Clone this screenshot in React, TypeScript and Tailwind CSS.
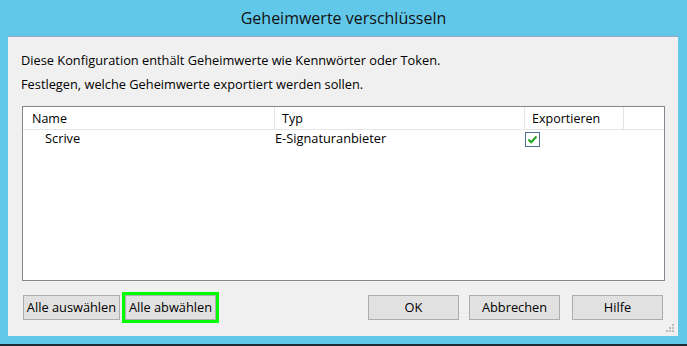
import React from "react";

const font = { fontFamily: '"Segoe UI", "Open Sans", "Liberation Sans", sans-serif' };

function Btn({ children, className = "" }: { children: React.ReactNode; className?: string }) {
  return (
    <div
      className={
        "h-[25px] w-[91px] flex items-center justify-center bg-[#e1e1e1] border border-[#adadad] text-[12.8px] text-[#000] " +
        className
      }
    >
      {children}
    </div>
  );
}

export default function App() {
  return (
    <div className="w-[687px] h-[346px] bg-[#62c8ea] flex flex-col overflow-hidden" style={font}>
      <div className="h-[36px] flex items-center justify-center text-[16px] text-[#111] pb-[1px]">
        Geheimwerte verschlüsseln
      </div>
      <div className="ml-[8px] mr-[9px] h-[300px] bg-[#f0f0f0] border-t border-[#9aa7c9] flex flex-col relative">
        <div className="pl-[13px] pt-[15px] text-[12.8px] text-[#000] leading-[16px]">
          Diese Konfiguration enthält Geheimwerte wie Kennwörter oder Token.
        </div>
        <div className="pl-[13px] pt-[8px] text-[12.8px] text-[#000] leading-[16px]">
          Festlegen, welche Geheimwerte exportiert werden sollen.
        </div>
        <div className="ml-[14px] mr-[13px] mt-[14px] h-[175px] bg-white border border-[#828790] flex flex-col">
          <div className="h-[23px] flex text-[12.5px] text-[#000] border-b border-[#e5e5e5]">
            <div className="w-[252px] pl-[9px] pt-[3px] flex items-center border-r border-[#e5e5e5]">Name</div>
            <div className="w-[250px] pl-[7px] pt-[3px] flex items-center border-r border-[#e5e5e5]">Typ</div>
            <div className="w-[99px] pl-[7px] pt-[3px] flex items-center border-r border-[#e5e5e5]">Exportieren</div>
            <div className="flex-1" />
          </div>
          <div className="h-[18px] flex items-center text-[12.8px] text-[#000]">
            <div className="w-[252px] pl-[22px]">Scrive</div>
            <div className="w-[250px] pl-[0px]">E-Signaturanbieter</div>
            <div className="w-[99px] pl-[0px] flex items-center">
              <div className="w-[15px] h-[15px] border border-[#4f6e96] bg-white flex items-center justify-center">
                <svg width="11" height="11" viewBox="0 0 11 11">
                  <path d="M1.5 5.5 L4.2 8.2 L9.5 2.5" fill="none" stroke="#21a121" strokeWidth="2" />
                </svg>
              </div>
            </div>
          </div>
        </div>
        <div className="mt-[14px] flex items-center pl-[15px] pr-[15px]">
          <Btn className="w-[97px]">Alle auswählen</Btn>
          <div className="ml-[2px] border-[3px] border-[#00ff00] mt-[-3px] mb-[-3px]">
            <Btn className="w-[91px]">Alle abwählen</Btn>
          </div>
          <div className="flex-1" />
          <Btn className="border-[#3c8dd0]">OK</Btn>
          <Btn className="ml-[10px]">Abbrechen</Btn>
          <Btn className="ml-[12px]">Hilfe</Btn>
        </div>
        <svg className="absolute right-[3px] bottom-[3px]" width="10" height="10" viewBox="0 0 10 10">
          <rect x="7" y="1" width="2" height="2" fill="#bdbdbd" />
          <rect x="4" y="4" width="2" height="2" fill="#bdbdbd" />
          <rect x="7" y="4" width="2" height="2" fill="#bdbdbd" />
          <rect x="1" y="7" width="2" height="2" fill="#bdbdbd" />
          <rect x="4" y="7" width="2" height="2" fill="#bdbdbd" />
          <rect x="7" y="7" width="2" height="2" fill="#bdbdbd" />
        </svg>
      </div>
      <div className="h-[8px]" />
      <div className="flex-1 bg-[#1b2a33]" />
    </div>
  );
}
